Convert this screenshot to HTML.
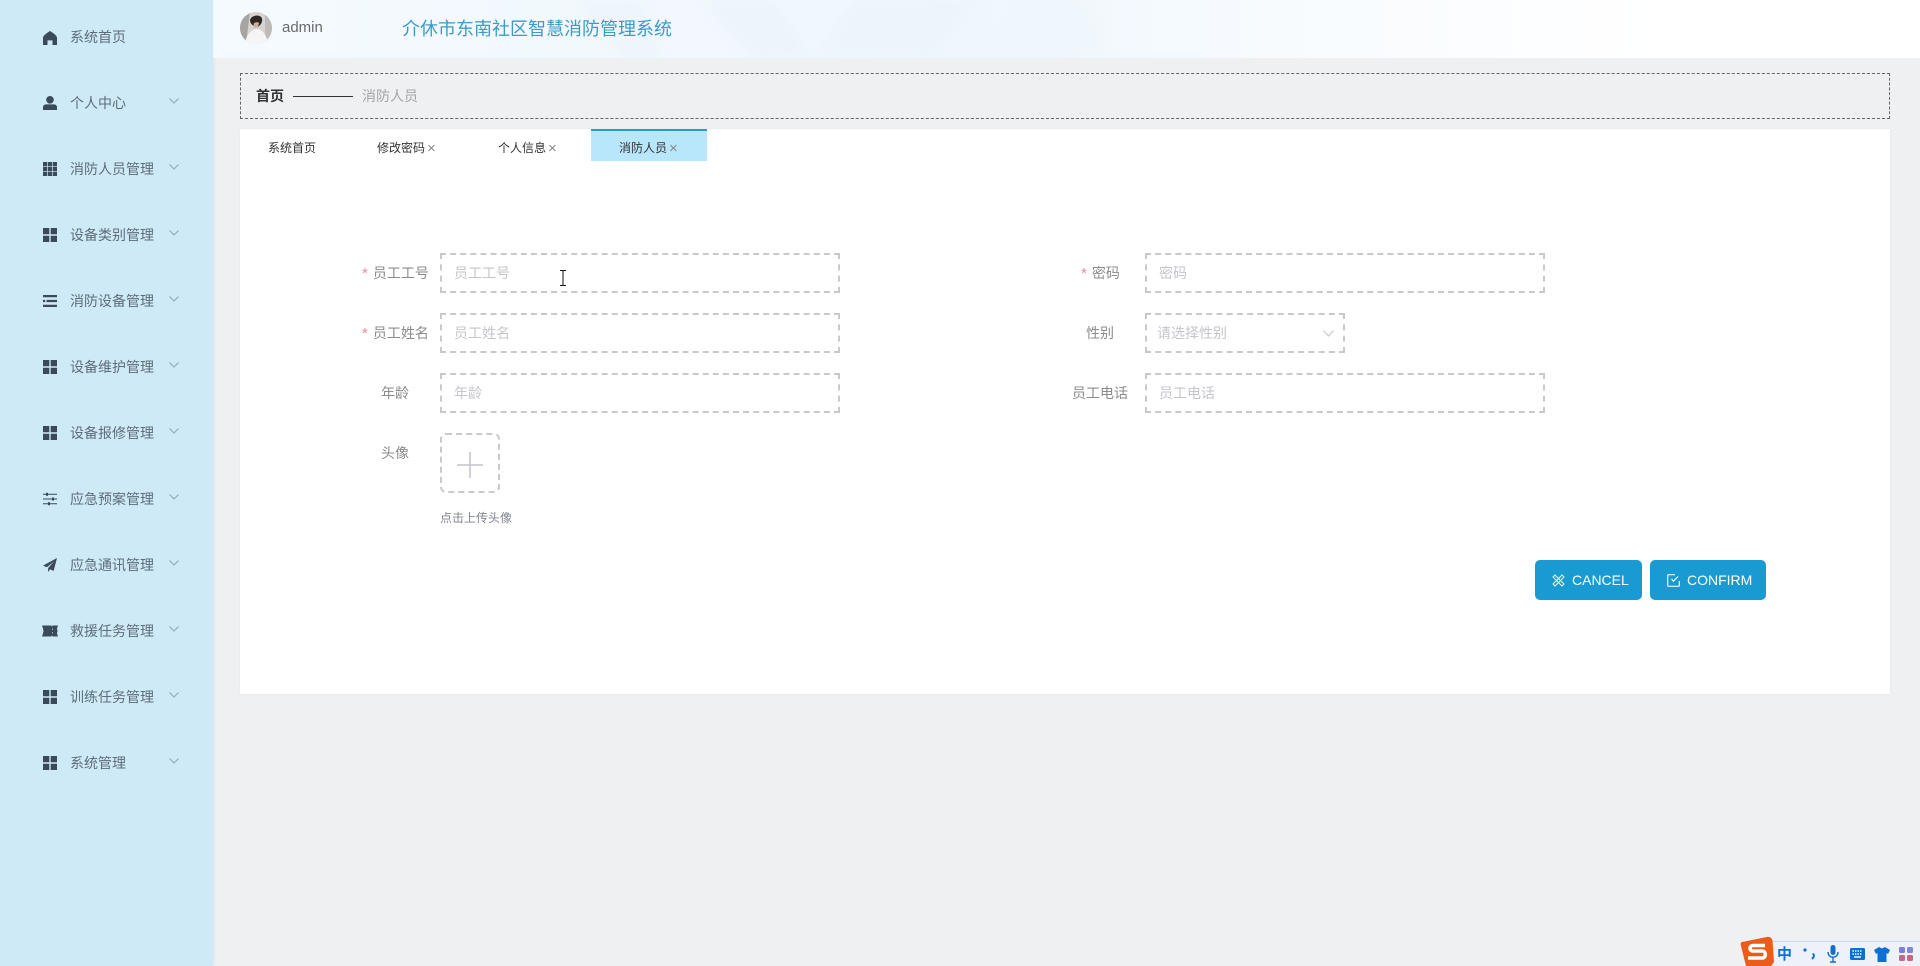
<!DOCTYPE html>
<html lang="zh-CN">
<head>
<meta charset="utf-8">
<title>介休市东南社区智慧消防管理系统</title>
<style>
html,body{margin:0;padding:0;width:1920px;height:966px;overflow:hidden;background:#eff0f2;font-family:"Liberation Sans","Noto Sans CJK SC",sans-serif;}
*{box-sizing:border-box;}
.a{position:absolute;white-space:nowrap;}
#side{left:0;top:0;width:213px;height:966px;background:#cfeaf7;box-shadow:1px 0 3px rgba(190,190,225,.3);}
.mi{position:absolute;left:70px;font-size:14px;line-height:20px;height:20px;color:#5d6d7a;white-space:nowrap;}
.ic{position:absolute;left:43px;width:14px;height:14px;fill:#3a4a5a;}
.ch{position:absolute;left:169px;width:10px;height:6px;fill:none;stroke:#8fa6b3;stroke-width:1;}
#head{left:213px;top:0;width:1707px;height:58px;background:linear-gradient(90deg,#f4fafe 0,#f1f8fd 35%,#eff7fd 45%,#f7fbfe 62%,#fff 85%);overflow:hidden;}
.tab{position:absolute;top:138px;font-size:12px;line-height:20px;color:#333;white-space:nowrap;}
.tab i{font-style:normal;font-size:15px;color:#888;font-family:"Liberation Sans",sans-serif;vertical-align:-1px;margin-left:2px;}
.lb{position:absolute;font-size:14px;line-height:20px;color:#8b8b8b;white-space:nowrap;}
.lb b{font-weight:400;color:#ea8a9c;margin-right:5px;font-size:15px;}
.inp{position:absolute;height:40px;border:2px dashed #c9c9c9;background:#fff;font-size:14px;line-height:36px;color:#c4c6cb;padding-left:12px;white-space:nowrap;}
.btn{position:absolute;top:560px;height:40px;background:#199bd2;border-radius:5px;color:#fff;font-size:14px;line-height:40px;white-space:nowrap;}
</style>
</head>
<body>

<div class="a" id="side"></div>

<svg class="ic" style="top:31px" viewBox="0 0 14 14"><path d="M7 0C9 1.200 11.500 3 13 4.600 13.800 5.400 14 6.200 14 7.200V14H9.500V9.400H4.500V14H0V7.200C0 6.200.2 5.400 1 4.600 2.500 3 5 1.200 7 0Z"/></svg>
<div class="mi" style="top:27px">系统首页</div>

<svg class="ic" style="top:96px" viewBox="0 0 14 14"><circle cx="7" cy="3.800" r="3.800"/><path d="M0 14V11.200C0 9.400 1.600 8.400 3.400 8.400H10.600C12.400 8.400 14 9.400 14 11.200V14Z"/></svg>
<div class="mi" style="top:93px">个人中心</div>
<svg class="ch" style="top:98px" viewBox="0 0 10 6"><path d="M.5.5 5 5 9.5.5"/></svg>

<svg class="ic" style="top:162px" viewBox="0 0 14 14"><path d="M0 0h4.200v4.200H0zM4.900 0h4.200v4.200H4.900zM9.800 0h4.200v4.200H9.800zM0 4.900h4.200v4.200H0zM4.900 4.900h4.200v4.200H4.900zM9.800 4.900h4.200v4.200H9.800zM0 9.800h4.200v4.200H0zM4.900 9.800h4.200v4.200H4.900zM9.800 9.800h4.200v4.200H9.800z"/></svg>
<div class="mi" style="top:159px">消防人员管理</div>
<svg class="ch" style="top:164px" viewBox="0 0 10 6"><path d="M.5.5 5 5 9.5.5"/></svg>

<svg class="ic" style="top:228px" viewBox="0 0 14 14"><path d="M0 0h6.300v6.300H0zM7.700 0H14v6.300H7.700zM0 7.700h6.300V14H0zM7.700 7.700H14V14H7.700z"/></svg>
<div class="mi" style="top:225px">设备类别管理</div>
<svg class="ch" style="top:230px" viewBox="0 0 10 6"><path d="M.5.5 5 5 9.5.5"/></svg>

<svg class="ic" style="top:294px" viewBox="0 0 14 14"><path d="M0 1h14v2.200H0zM3.500 5.900H14v2.200H3.500zM0 10.800h14V13H0zM0 5.900h2.200v2.200H0z"/></svg>
<div class="mi" style="top:291px">消防设备管理</div>
<svg class="ch" style="top:296px" viewBox="0 0 10 6"><path d="M.5.5 5 5 9.5.5"/></svg>

<svg class="ic" style="top:360px" viewBox="0 0 14 14"><path d="M0 0h6.300v6.300H0zM7.700 0H14v6.300H7.700zM0 7.700h6.300V14H0zM7.700 7.700H14V14H7.700z"/></svg>
<div class="mi" style="top:357px">设备维护管理</div>
<svg class="ch" style="top:362px" viewBox="0 0 10 6"><path d="M.5.5 5 5 9.5.5"/></svg>

<svg class="ic" style="top:426px" viewBox="0 0 14 14"><path d="M0 0h6.300v6.300H0zM7.700 0H14v6.300H7.700zM0 7.700h6.300V14H0zM7.700 7.700H14V14H7.700z"/></svg>
<div class="mi" style="top:423px">设备报修管理</div>
<svg class="ch" style="top:428px" viewBox="0 0 10 6"><path d="M.5.5 5 5 9.5.5"/></svg>

<svg class="ic" style="top:492px" viewBox="0 0 14 14"><path d="M0 1.800h14v1H0zM0 6.500h14v1H0zM0 11.200h14v1H0z"/><rect x="3" y=".8" width="2" height="3"/><rect x="9" y="5.500" width="2" height="3"/><rect x="5" y="10.200" width="2" height="3"/></svg>
<div class="mi" style="top:489px">应急预案管理</div>
<svg class="ch" style="top:494px" viewBox="0 0 10 6"><path d="M.5.5 5 5 9.500.5"/></svg>

<svg class="ic" style="top:558px" viewBox="0 0 14 14"><path d="M14 0 0 7.600 3.800 9.300 11 3.500 5.200 10 5 14 7.200 11.300 10.600 13Z"/></svg>
<div class="mi" style="top:555px">应急通讯管理</div>
<svg class="ch" style="top:560px" viewBox="0 0 10 6"><path d="M.5.5 5 5 9.500.5"/></svg>

<svg class="ic" style="top:624px;left:42px;width:16px" viewBox="0 0 16 14"><path d="M0 1.500h9.500l.5 1.500.5-1.500H16L15 4.500 15.500 7 15 9.500 16 12.500h-5.500L10 11l-.5 1.500H0L1 9.500 1.500 7 1 4.500Z"/><path d="M10 4.500h.6v1.500H10zM10 8h.6v1.500H10z" fill="#cfeaf7"/></svg>
<div class="mi" style="top:621px">救援任务管理</div>
<svg class="ch" style="top:626px" viewBox="0 0 10 6"><path d="M.5.500 5 5 9.500.5"/></svg>

<svg class="ic" style="top:690px" viewBox="0 0 14 14"><path d="M0 0h6.300v6.300H0zM7.700 0H14v6.300H7.700zM0 7.700h6.300V14H0zM7.700 7.700H14V14H7.700z"/></svg>
<div class="mi" style="top:687px">训练任务管理</div>
<svg class="ch" style="top:692px" viewBox="0 0 10 6"><path d="M.5.500 5 5 9.500.5"/></svg>

<svg class="ic" style="top:756px" viewBox="0 0 14 14"><path d="M0 0h6.300v6.300H0zM7.700 0H14v6.300H7.700zM0 7.700h6.300V14H0zM7.700 7.700H14V14H7.700z"/></svg>
<div class="mi" style="top:753px">系统管理</div>
<svg class="ch" style="top:758px" viewBox="0 0 10 6"><path d="M.5.500 5 5 9.500.5"/></svg>

<!-- header -->
<div class="a" id="head">
<svg width="1707" height="58" style="position:absolute;left:0;top:0">
<defs><filter id="bl"><feGaussianBlur stdDeviation="6"/></filter></defs>
<g filter="url(#bl)">
<path d="M360 0 410 58H450L430 0Z" fill="#e6f1fa" opacity=".45"/>
<path d="M490 0 540 58H600L560 0Z" fill="#e4eff9" opacity=".4"/>
<path d="M640 0 600 58H720L760 0Z" fill="#e6f1fa" opacity=".35"/>
<path d="M800 0 780 58H900L880 0Z" fill="#edf5fb" opacity=".4"/>
</g>
</svg>
</div>

<!-- avatar -->
<svg class="a" style="left:240px;top:12px" width="32" height="32" viewBox="0 0 32 32">
<defs><clipPath id="c"><circle cx="16" cy="16" r="16"/></clipPath></defs>
<g clip-path="url(#c)">
<rect width="32" height="32" fill="#d6d3d1"/>
<path d="M0 0h10L6 32H0Z" fill="#a8a4a1"/>
<path d="M25 0h7v32h-7Z" fill="#bdbab8"/>
<path d="M5 32C6 23 11 17 17 17c5 0 10 6 11 15Z" fill="#f5f5f5"/>
<path d="M10 8c1-4 8-6 11-3 2 2 1 5 0 7l-3 3c-4 0-8-3-8-7Z" fill="#2e2724"/>
<path d="M14 11c2-1 4-1 5 0l-1 4-3 1c-1-1-2-3-1-5Z" fill="#cfae9e"/>
</g>
</svg>
<div class="a" style="left:282px;top:18px;font-size:15px;line-height:20px;color:#6a6a6a;">admin</div>
<div class="a" style="left:402px;top:17px;font-size:18px;line-height:24px;color:#3a9cc7;">介休市东南社区智慧消防管理系统</div>

<!-- breadcrumb -->
<div class="a" style="left:240px;top:73px;width:1650px;height:46px;border:1px dashed #666;"></div>
<div class="a" style="left:256px;top:86px;font-size:14px;line-height:20px;color:#303133;font-weight:700;">首页</div>
<div class="a" style="left:293px;top:96px;width:60px;height:1px;background:#333;"></div>
<div class="a" style="left:362px;top:86px;font-size:14px;line-height:20px;color:#a5a5a5;">消防人员</div>

<!-- card -->
<div class="a" style="left:240px;top:129px;width:1650px;height:565px;background:#fff;box-shadow:0 0 3px rgba(0,0,0,.05);"></div>
<div class="a" style="left:591px;top:129px;width:116px;height:32px;background:#b8e6fb;border-top:2px solid #2a9cc9;"></div>
<div class="tab" style="left:268px">系统首页</div>
<div class="tab" style="left:377px">修改密码<i>×</i></div>
<div class="tab" style="left:498px">个人信息<i>×</i></div>
<div class="tab" style="left:619px">消防人员<i>×</i></div>

<!-- form left -->
<div class="lb" style="left:362px;top:263px"><b>*</b>员工工号</div>
<div class="inp" style="left:440px;top:253px;width:400px">员工工号</div>
<div class="lb" style="left:362px;top:323px"><b>*</b>员工姓名</div>
<div class="inp" style="left:440px;top:313px;width:400px">员工姓名</div>
<div class="lb" style="left:381px;top:383px">年龄</div>
<div class="inp" style="left:440px;top:373px;width:400px">年龄</div>
<div class="lb" style="left:381px;top:443px">头像</div>
<div class="a" style="left:440px;top:433px;width:60px;height:60px;border:2px dashed #c9c9c9;border-radius:6px;"></div>
<svg class="a" style="left:457px;top:452px" width="26" height="26" viewBox="0 0 26 26"><path d="M13 0V26M0 13H26" stroke="#c0c4cc" stroke-width="1.500" fill="none"/></svg>
<div class="a" style="left:440px;top:509px;font-size:12px;line-height:18px;color:#7f8590;">点击上传头像</div>

<!-- form right -->
<div class="lb" style="left:1081px;top:263px"><b>*</b>密码</div>
<div class="inp" style="left:1145px;top:253px;width:400px">密码</div>
<div class="lb" style="left:1086px;top:323px">性别</div>
<div class="inp" style="left:1145px;top:313px;width:200px;padding-left:10px">请选择性别</div>
<svg class="a" style="left:1323px;top:330px" width="11" height="7" viewBox="0 0 11 7"><path d="M.5.500 5.500 6 10.500.500" fill="none" stroke="#c0c4cc"/></svg>
<div class="lb" style="left:1072px;top:383px">员工电话</div>
<div class="inp" style="left:1145px;top:373px;width:400px">员工电话</div>

<!-- buttons -->
<div class="btn" style="left:1535px;width:107px;padding-left:37px">CANCEL</div>
<svg class="a" style="left:1552px;top:574px" width="13" height="13" viewBox="0 0 13 13"><path d="M1 3 3 1 12 10 10 12ZM10 1 12 3 3 12 1 10Z" fill="none" stroke="#e6f6fc" stroke-width="1"/></svg>
<div class="btn" style="left:1650px;width:116px;padding-left:37px">CONFIRM</div>
<svg class="a" style="left:1667px;top:574px" width="13" height="13" viewBox="0 0 13 13"><path d="M12.300 7V11.500Q12.300 12.300 11.500 12.300H1.500Q.7 12.300 .7 11.500V1.500Q.7 .7 1.500 .7H8M4.500 5 6.500 7.200 11 2.500" fill="none" stroke="#eaf8fd" stroke-width="1.200"/></svg>

<!-- I-beam cursor -->
<svg class="a" style="left:559px;top:270px" width="8" height="16" viewBox="0 0 8 16"><path d="M1 .5H3.500L4 1 4.500 .5H7M4 1V15M1 15.500H3.500L4 15 4.500 15.500H7" fill="none" stroke="#111" stroke-width="1"/></svg>

<!-- IME bar -->
<div class="a" style="left:1765px;top:941px;width:155px;height:25px;background:#eef2f8;border-top:1px solid #cdd6e6;border-left:1px solid #cdd6e6;"></div>
<svg class="a" style="left:1738px;top:935px" width="38" height="31" viewBox="0 0 38 31">
<path d="M4 7 29 2C32 1.500 34 3 34.500 6L36 27 33 31H8L3 11C2.500 9 2.500 7.500 4 7Z" fill="#ec5b17"/>
<path d="M27 10.500H15C11 10.500 11 16 15 16H24C28.500 16 28.500 23 24 23H10" fill="none" stroke="#fff" stroke-width="3.600"/>
</svg>
<div class="a" style="left:1777px;top:944px;font-size:15px;line-height:20px;color:#0d6fd1;font-weight:700;font-family:'Noto Sans CJK SC',sans-serif;">中</div>
<svg class="a" style="left:1802px;top:946px" width="14" height="16" viewBox="0 0 14 16"><circle cx="3" cy="4" r="1.600" fill="#0d6fd1"/><path d="M10.500 8C12.500 8 12.500 10.500 10 13" fill="none" stroke="#0d6fd1" stroke-width="2"/></svg>
<svg class="a" style="left:1827px;top:944px" width="12" height="19" viewBox="0 0 12 19"><rect x="3.500" y="1" width="5" height="10" rx="2.500" fill="#0d6fd1"/><path d="M1 8C1 15 11 15 11 8M6 13V18M3 18H9" fill="none" stroke="#0d6fd1" stroke-width="1.400"/></svg>
<svg class="a" style="left:1850px;top:948px" width="15" height="12" viewBox="0 0 15 12"><rect width="15" height="12" rx="1.500" fill="#0d6fd1"/><path d="M2.500 3H12.500M2.500 6H12.500" stroke="#fff" stroke-dasharray="1.400 1.100" stroke-width="1.400"/><path d="M4 9H11" stroke="#fff" stroke-width="1.400"/></svg>
<svg class="a" style="left:1874px;top:947px" width="16" height="15" viewBox="0 0 16 15"><path d="M5 0 8 1.500 11 0 16 3 14 7 12.500 6V15H3.500V6L2 7 0 3Z" fill="#0d6fd1"/></svg>
<svg class="a" style="left:1899px;top:947px" width="14" height="14" viewBox="0 0 14 14"><rect width="6" height="6" rx="1.500" fill="#7a7fd8"/><rect x="8" width="6" height="6" rx="1.500" fill="#7f86dc"/><rect y="8" width="6" height="6" rx="1.500" fill="#c06a8a"/><rect x="8" y="8" width="6" height="6" rx="1.500" fill="#c56a80"/></svg>

</body>
</html>
